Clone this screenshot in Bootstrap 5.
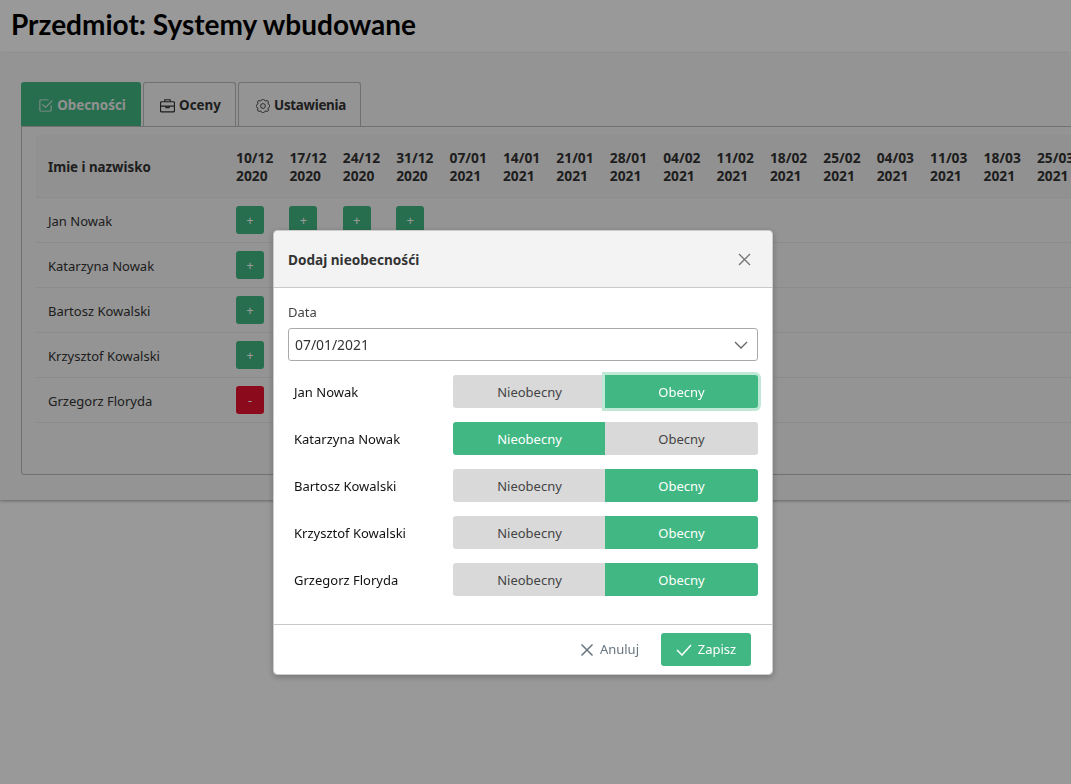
<!DOCTYPE html>
<html lang="pl">
<head>
<meta charset="UTF-8">
<title>Przedmiot: Systemy wbudowane</title>
<link href="https://cdn.jsdelivr.net/npm/bootstrap@5.3.3/dist/css/bootstrap.min.css" rel="stylesheet"/>
<style>
html, body { height: 100%; overflow: hidden; }
body { background: #fff; font-family: "Noto Sans", "Liberation Sans", sans-serif; font-size: 13px; color: #333; }
.page-head { height: 53px; padding: 0 0 4px 11px; }
.page-head h1 { font-family: Lato, "Liberation Sans", sans-serif; font-size: 28px; font-weight: 700; color: #000; margin: 0; }
.page-panel { height: 447px; background: #f7f7f7; padding: 29px 0 0 21px; box-shadow: 0 1px 3px rgba(0,0,0,.35); overflow: hidden; }
.subject-tabs { border: 0; gap: 2px; }
.subject-tabs .nav-link { height: 44px; display: flex; align-items: center; justify-content: center; gap: 4px; padding: 2px 0 0 2px; font-size: 13.4px; font-weight: 700; color: #333; border: 1px solid #bbb; border-bottom: 0; border-radius: 3px 3px 0 0; background: #f7f7f7; margin: 0; }
.subject-tabs .nav-link.active { background: #41b883; border-color: #41b883; color: #f2f2f2; }
.subject-tabs .nav-link.tab-tight { letter-spacing: -.3px; padding-left: 3px; }
.tab-box { width: 1100px; height: 349px; border: 1px solid #bbb; border-radius: 0 0 3px 3px; padding: 8px 0 0 14px; }
.attendance { table-layout: fixed; width: 1054.4px; margin: 0; color: #333; --bs-table-bg: transparent; }
.attendance th, .attendance td { padding: 0; border-bottom: 1px solid #e9e9e9; vertical-align: middle; font-size: 13px; }
.attendance thead th { height: 62px; padding-top: 2px; background: #f2f2f2; line-height: 18px; font-weight: 700; font-size: 13.8px; white-space: nowrap; border-bottom: 1px solid #e9e9e9; }
.attendance thead th.name-col { font-size: 13.3px; }
.attendance tbody td { height: 45px; }
.attendance .name-col { width: 200px; padding-left: 12px; }
.attendance tbody td.name-col { padding-top: 5px; }
.attendance .date-col { width: 53.4px; }
.mark-btn { width: 28px; height: 28px; padding: 0; border: 0; border-radius: 3px; font-size: 13px; line-height: 28px; color: #fff; background: #41b883; display: block; }
.mark-btn.off { background: #e8112d; }
.dim-layer { background: #000; opacity: .4; }
.sheet { --bs-modal-width: 500px; }
.sheet .modal-dialog { margin: 230px 0 0 273px; }
.sheet .modal-content { border: 1px solid #ccc; border-radius: 4px; height: 445px; box-shadow: 0 2px 6px rgba(0,0,0,.25); }
.sheet .modal-header { height: 57px; background: #f3f3f3; padding: 2px 21px 0 14px; border-bottom: 1px solid #c8c8c8; border-radius: 4px 4px 0 0; }
.sheet .modal-title { font-size: 13.6px; font-weight: 700; color: #333; }
.x-btn { padding: 0 0 2px; border: 0; background: none; line-height: 0; color: #777; }
.sheet .modal-body { padding: 14px 14px 0; }
.sheet .form-label { display: block; margin: 0 0 6px; line-height: 20px; font-size: 13px; color: #444; }
.sheet .form-select { height: 33px; padding: 2px 30px 0 6px; font-size: 13.9px; color: #333; border: 1px solid #aaa; border-radius: 3px; background-position: right 8px center; background-size: 16px 10px; background-image: url("data:image/svg+xml,%3csvg xmlns='http://www.w3.org/2000/svg' viewBox='0 0 16 10'%3e%3cpath fill='none' stroke='%23666' stroke-width='1.4' d='M2 2l6 6 6-6'/%3e%3c/svg%3e"); }
.person-row { height: 33px; margin-bottom: 14px; color: #111; }
.person-row:first-of-type { margin-top: 14px; }
.person-name { width: 165px; padding: 2px 0 0 6px; }
.seg-group { width: 305px; height: 33px; }
.seg-group .btn { flex: 1 1 50%; border: 0; font-size: 13px; padding: 2px 0 0; background: #d9d9d9; color: #444; border-radius: 3px; }
.seg-group .btn.on { background: #41b883; color: #fff; }
.seg-group .btn.ring { box-shadow: 0 0 0 3px #bfe8d6; z-index: 1; }
.sheet .modal-footer { height: 50px; padding: 0 21px 0 0; margin-top: auto; border-top: 1px solid #c8c8c8; gap: 22px; align-items: center; flex-wrap: nowrap; }
.act-plain { padding: 1px 0 0; border: 0; background: none; color: #66757f; font-size: 13px; display: flex; align-items: center; gap: 6px; margin: 0; }
.act-save { width: 90px; height: 33px; padding: 1px 0 0; border: 0; border-radius: 3px; background: #41b883; color: #fff; font-size: 13px; display: flex; align-items: center; justify-content: center; gap: 6px; margin: 0; }
</style>
</head>
<body>
<header class="page-head d-flex align-items-center">
  <h1>Przedmiot: Systemy wbudowane</h1>
</header>
<section class="page-panel">
  <ul class="nav nav-tabs subject-tabs">
    <li class="nav-item"><a class="nav-link active" href="#" style="width:120px">
      <svg width="15" height="15" viewBox="0 0 16 16" fill="currentColor"><path d="M3 14.5A1.5 1.5 0 0 1 1.5 13V3A1.5 1.5 0 0 1 3 1.5h8a.5.5 0 0 1 0 1H3a.5.5 0 0 0-.5.5v10a.5.5 0 0 0 .5.5h10a.5.5 0 0 0 .5-.5V8a.5.5 0 0 1 1 0v5a1.5 1.5 0 0 1-1.5 1.5H3z"/><path d="m8.354 10.354 7-7a.5.5 0 0 0-.708-.708L8 9.293 5.354 6.646a.5.5 0 1 0-.708.708l3 3a.5.5 0 0 0 .708 0z"/></svg>
      Obecności</a></li>
    <li class="nav-item"><a class="nav-link" href="#" style="width:93px">
      <svg width="15" height="15" viewBox="1 1.5 14 13" fill="none" stroke="currentColor" stroke-width="1.1"><rect x="1.5" y="4.5" width="13" height="9.5" rx="1"/><path d="M5.5 4.5V2.6h5v1.9M1.5 8.5h13M6.5 8.5v1.5h3V8.5"/></svg>
      Oceny</a></li>
    <li class="nav-item"><a class="nav-link tab-tight" href="#" style="width:123px">
      <svg width="14" height="14" viewBox="0 0 16 16" fill="none" stroke="currentColor" stroke-width="1"><circle cx="8" cy="8" r="2.75"/><path d="M9.796 1.343c-.527-1.79-3.065-1.79-3.592 0l-.094.319a.873.873 0 0 1-1.255.52l-.292-.16c-1.64-.892-3.433.902-2.54 2.541l.159.292a.873.873 0 0 1-.52 1.255l-.319.094c-1.79.527-1.79 3.065 0 3.592l.319.094a.873.873 0 0 1 .52 1.255l-.16.292c-.892 1.64.901 3.434 2.541 2.54l.292-.159a.873.873 0 0 1 1.255.52l.094.319c.527 1.79 3.065 1.79 3.592 0l.094-.319a.873.873 0 0 1 1.255-.52l.292.16c1.64.893 3.434-.902 2.54-2.541l-.159-.292a.873.873 0 0 1 .52-1.255l.319-.094c1.79-.527 1.79-3.065 0-3.592l-.319-.094a.873.873 0 0 1-.52-1.255l.16-.292c.893-1.64-.902-3.433-2.541-2.54l-.292.159a.873.873 0 0 1-1.255-.52l-.094-.319z"/></svg>
      Ustawienia</a></li>
  </ul>
  <div class="tab-box">
    <table class="table attendance">
      <thead>
        <tr>
          <th class="name-col">Imie i nazwisko</th>
          <th class="date-col">10/12<br>2020</th>
          <th class="date-col">17/12<br>2020</th>
          <th class="date-col">24/12<br>2020</th>
          <th class="date-col">31/12<br>2020</th>
          <th class="date-col">07/01<br>2021</th>
          <th class="date-col">14/01<br>2021</th>
          <th class="date-col">21/01<br>2021</th>
          <th class="date-col">28/01<br>2021</th>
          <th class="date-col">04/02<br>2021</th>
          <th class="date-col">11/02<br>2021</th>
          <th class="date-col">18/02<br>2021</th>
          <th class="date-col">25/02<br>2021</th>
          <th class="date-col">04/03<br>2021</th>
          <th class="date-col">11/03<br>2021</th>
          <th class="date-col">18/03<br>2021</th>
          <th class="date-col">25/03<br>2021</th>
        </tr>
      </thead>
      <tbody>
        <tr><td class="name-col">Jan Nowak</td><td><button class="mark-btn">+</button></td><td><button class="mark-btn">+</button></td><td><button class="mark-btn">+</button></td><td><button class="mark-btn">+</button></td><td colspan="12"></td></tr>
        <tr><td class="name-col">Katarzyna Nowak</td><td><button class="mark-btn">+</button></td><td colspan="15"></td></tr>
        <tr><td class="name-col">Bartosz Kowalski</td><td><button class="mark-btn">+</button></td><td colspan="15"></td></tr>
        <tr><td class="name-col">Krzysztof Kowalski</td><td><button class="mark-btn">+</button></td><td colspan="15"></td></tr>
        <tr><td class="name-col">Grzegorz Floryda</td><td><button class="mark-btn off">-</button></td><td colspan="15"></td></tr>
      </tbody>
    </table>
  </div>
</section>

<div class="modal-backdrop dim-layer"></div>
<div class="modal d-block sheet">
  <div class="modal-dialog">
    <div class="modal-content">
      <div class="modal-header">
        <h5 class="modal-title">Dodaj nieobecnośći</h5>
        <button class="x-btn ms-auto" aria-label="Zamknij"><svg width="13" height="13" viewBox="0 0 13 13" fill="none" stroke="currentColor" stroke-width="1.4"><path d="M1 1l11 11M12 1L1 12"/></svg></button>
      </div>
      <div class="modal-body flex-grow-0">
        <label class="form-label" for="dateSelect">Data</label>
        <select class="form-select" id="dateSelect"><option>07/01/2021</option></select>
        <div class="person-row d-flex align-items-center">
          <div class="person-name">Jan Nowak</div>
          <div class="btn-group seg-group"><button class="btn">Nieobecny</button><button class="btn on ring">Obecny</button></div>
        </div>
        <div class="person-row d-flex align-items-center">
          <div class="person-name">Katarzyna Nowak</div>
          <div class="btn-group seg-group"><button class="btn on">Nieobecny</button><button class="btn">Obecny</button></div>
        </div>
        <div class="person-row d-flex align-items-center">
          <div class="person-name">Bartosz Kowalski</div>
          <div class="btn-group seg-group"><button class="btn">Nieobecny</button><button class="btn on">Obecny</button></div>
        </div>
        <div class="person-row d-flex align-items-center">
          <div class="person-name">Krzysztof Kowalski</div>
          <div class="btn-group seg-group"><button class="btn">Nieobecny</button><button class="btn on">Obecny</button></div>
        </div>
        <div class="person-row d-flex align-items-center">
          <div class="person-name">Grzegorz Floryda</div>
          <div class="btn-group seg-group"><button class="btn">Nieobecny</button><button class="btn on">Obecny</button></div>
        </div>
      </div>
      <div class="modal-footer">
        <button class="act-plain"><svg width="14" height="14" viewBox="0 0 14 14" fill="none" stroke="currentColor" stroke-width="1.5"><path d="M1.5 1.5l11 11M12.5 1.5l-11 11"/></svg>Anuluj</button>
        <button class="act-save"><svg width="16" height="12" viewBox="0 0 16 12" fill="none" stroke="currentColor" stroke-width="1.5"><path d="M1 6l5 5L15 1"/></svg>Zapisz</button>
      </div>
    </div>
  </div>
</div>
<script src="https://cdn.jsdelivr.net/npm/bootstrap@5.3.3/dist/js/bootstrap.bundle.min.js"></script>
</body>
</html>
